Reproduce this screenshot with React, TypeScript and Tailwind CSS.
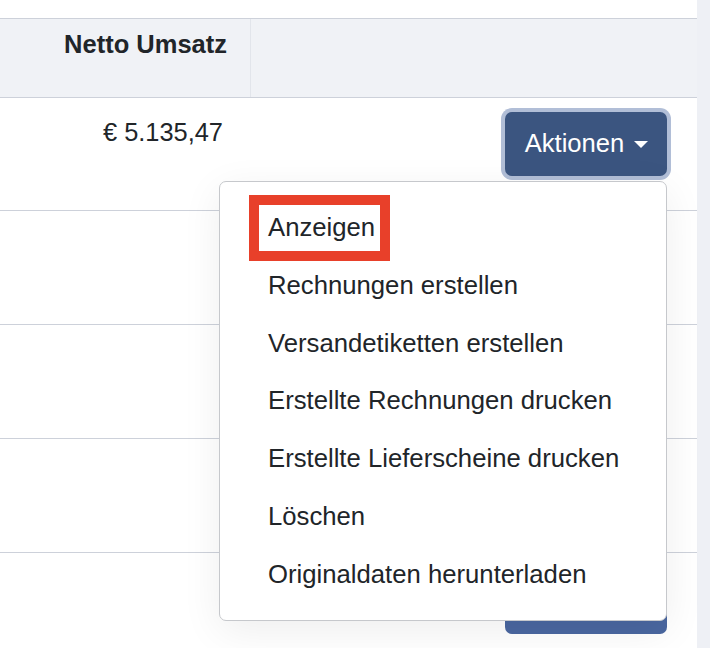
import React from "react";

const items = [
  "Anzeigen",
  "Rechnungen erstellen",
  "Versandetiketten erstellen",
  "Erstellte Rechnungen drucken",
  "Erstellte Lieferscheine drucken",
  "Löschen",
  "Originaldaten herunterladen",
];

function Caret() {
  return (
    <svg width="14" height="7" viewBox="0 0 14 7" className="block">
      <polygon points="0,0 14,0 7,7" fill="#ffffff" />
    </svg>
  );
}

function ActionButton({ focused, tone }: { focused?: boolean; tone?: string }) {
  return (
    <button
      className={
        "flex h-[64px] w-[162px] items-center justify-center gap-[10px] rounded-[7px] pl-[1px] text-[25.6px] leading-[37.5px] text-white " +
        (tone === "light" ? "bg-[#4a67a0] " : "bg-[#3b5580] ") +
        (focused ? "shadow-[0_0_0_4px_#b1bed7]" : "")
      }
    >
      <span>Aktionen</span>
      <Caret />
    </button>
  );
}

function Row({
  amount,
  focused,
  tone,
  pt,
}: {
  amount?: string;
  focused?: boolean;
  tone?: string;
  pt: string;
}) {
  return (
    <div className="grid h-[114px] grid-cols-[251px_1fr] border-b border-[#cdd1da]">
      <div className="pr-[28px] pt-[17px] text-right text-[25.6px] leading-[37.5px]">{amount}</div>
      <div className={"flex justify-end pr-[30px] " + pt}>
        <ActionButton focused={focused} tone={tone} />
      </div>
    </div>
  );
}

export default function App() {
  return (
    <div className="relative flex h-[648px] w-[710px] overflow-hidden bg-white font-['Liberation_Sans',Arial,sans-serif] text-[#212529]">
      <div className="relative flex-1 pt-[18px]">
        {/* header */}
        <div className="grid h-[80px] grid-cols-[251px_1fr] border-y border-[#cdd1da] bg-[#f0f2f6]">
          <div className="border-r border-[#e2e5eb] pr-[23px] pt-[7px] text-right text-[25.5px] font-bold leading-[37.5px]">
            Netto Umsatz
          </div>
          <div />
        </div>

        <div className="grid h-[113px] grid-cols-[251px_1fr] border-b border-[#cdd1da]">
          <div className="pr-[28px] pt-[16px] text-right text-[25.4px] leading-[37.5px]">€ 5.135,47</div>
          <div className="flex justify-end pr-[30px] pt-[14px]">
            <ActionButton focused />
          </div>
        </div>
        <Row pt="pt-[16px]" />
        <Row pt="pt-[16px]" />
        <Row pt="pt-[16px]" />
        <div className="grid h-[100px] grid-cols-[251px_1fr]">
          <div />
          <div className="flex justify-end pr-[30px] pt-[17px]">
            <ActionButton tone="light" />
          </div>
        </div>

        {/* dropdown menu */}
        <div className="absolute left-[219px] top-[181px] w-[448px] rounded-[7px] border border-[#c6c8cc] bg-white pb-[16px] pt-[17px] shadow-[0_10px_40px_rgba(0,0,0,0.07)]">
          {items.map((t) => (
            <div key={t} className="whitespace-nowrap pl-[48px] py-[10px] text-[25.7px] leading-[37.8px] text-[#212529]">
              {t}
            </div>
          ))}
          <div className="pointer-events-none absolute left-[29px] top-[13px] h-[66px] w-[141px] border-[10px] border-[#e8402a]" />
        </div>
      </div>
      <div className="w-[13px] bg-[#eef0f5]" />
    </div>
  );
}
